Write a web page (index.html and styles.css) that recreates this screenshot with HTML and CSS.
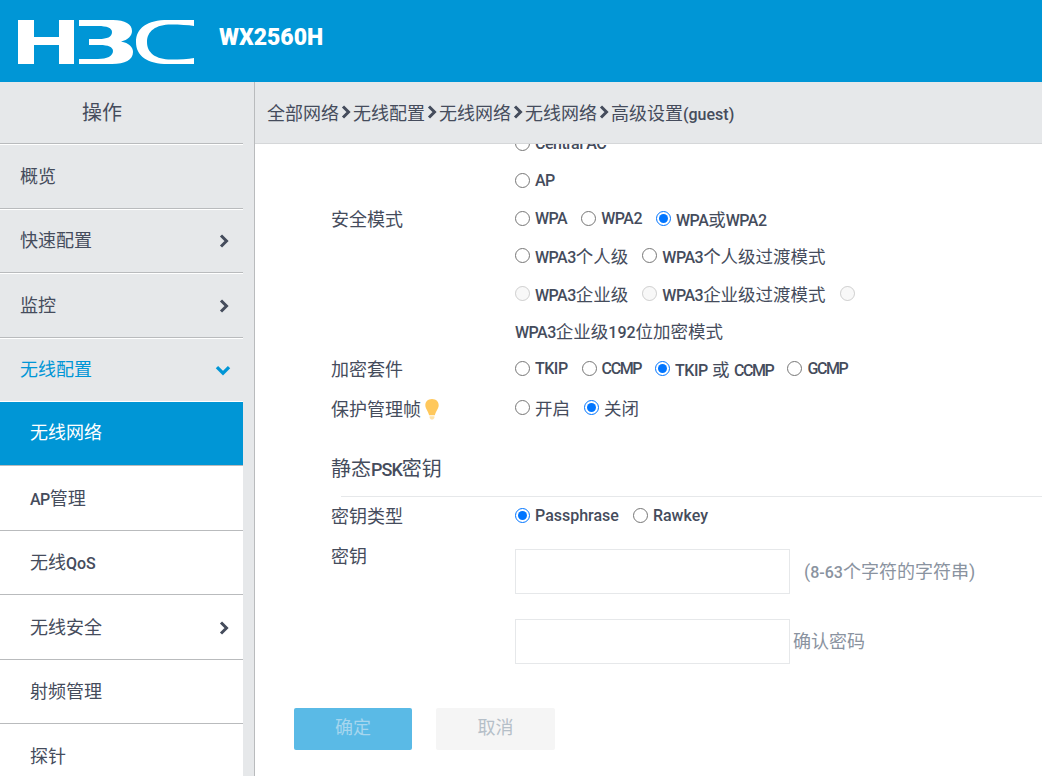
FILE: index.html
```html
<!DOCTYPE html>
<html lang="zh-CN">
<head>
<meta charset="utf-8">
<title>WX2560H</title>
<link rel="stylesheet" href="styles.css">
</head>
<body>
<header class="header">
  <svg class="logo" viewBox="0 0 176 44" width="176" height="44" aria-label="H3C">
    <path fill="#fff" d="M0 0H16V17H41V0H56V44H41V25H16V44H0Z"/>
    <path fill="#fff" d="M61 0H95C107 0 114 4 114 11C114 16 110 20 103 21.500C111 23 115 27 115 32C115 40 107 44 94 44H61V39H80C89 39 95 36 95 31C95 27 90 25 82 25H71V19H81C89 19 94 17 94 12C94 8 89 6 80 6H61Z"/>
    <path fill="#fff" d="M176 0V6C170 5 162 4.500 153 4.500C138 4.500 129 11 129 22C129 33 138 39.500 153 39.500C162 39.500 170 39 176 38V44H150C129 44 118 36 118 22C118 8 129 0 150 0Z"/>
  </svg>
  <span class="model">WX2560H</span>
</header>
<div class="main">
  <aside class="sidebar">
    <nav class="menu">
      <div class="menu-title">操作</div>
      <a class="menu-item">概览</a>
      <a class="menu-item">快速配置<svg class="chev" viewBox="0 0 10 14"><path d="M2 1.500L7.500 7L2 12.500"/></svg></a>
      <a class="menu-item">监控<svg class="chev" viewBox="0 0 10 14"><path d="M2 1.500L7.500 7L2 12.500"/></svg></a>
      <a class="menu-item open">无线配置<svg class="chev-down" viewBox="0 0 14 10"><path d="M1.500 2L7 7.500L12.500 2"/></svg></a>
      <a class="sub-item active">无线网络</a>
      <a class="sub-item"><span><span class="lat caps">AP</span>管理</span></a>
      <a class="sub-item"><span>无线<span class="lat">QoS</span></span></a>
      <a class="sub-item">无线安全<svg class="chev" viewBox="0 0 10 14"><path d="M2 1.500L7.500 7L2 12.500"/></svg></a>
      <a class="sub-item">射频管理</a>
      <a class="sub-item">探针</a>
    </nav>
    <div class="track"></div>
  </aside>
  <section class="panel">
    <div class="crumbs">
      <span>全部网络</span><svg class="sep" viewBox="0 0 10 14"><path d="M2 1.500L7.500 7L2 12.500"/></svg>
      <span>无线配置</span><svg class="sep" viewBox="0 0 10 14"><path d="M2 1.500L7.500 7L2 12.500"/></svg>
      <span>无线网络</span><svg class="sep" viewBox="0 0 10 14"><path d="M2 1.500L7.500 7L2 12.500"/></svg>
      <span>无线网络</span><svg class="sep" viewBox="0 0 10 14"><path d="M2 1.500L7.500 7L2 12.500"/></svg>
      <span>高级设置<span class="lat">(guest)</span></span>
    </div>
    <div class="scroll">
      <form class="form">
        <div class="row">
          <div class="label"></div>
          <div class="opts">
            <div class="line"><label class="opt"><input type="radio" name="ac"><span class="lat caps">Central AC</span></label></div>
            <div class="line"><label class="opt"><input type="radio" name="ac"><span class="lat caps">AP</span></label></div>
          </div>
        </div>
        <div class="row">
          <div class="label">安全模式</div>
          <div class="opts">
            <div class="line">
              <label class="opt"><input type="radio" name="sec"><span class="lat caps">WPA</span></label>
              <label class="opt"><input type="radio" name="sec"><span class="lat caps">WPA2</span></label>
              <label class="opt"><input type="radio" name="sec" checked><span><span class="lat caps">WPA</span>或<span class="lat caps">WPA2</span></span></label>
            </div>
            <div class="line">
              <label class="opt"><input type="radio" name="sec"><span><span class="lat caps">WPA3</span>个人级</span></label>
              <label class="opt"><input type="radio" name="sec"><span><span class="lat caps">WPA3</span>个人级过渡模式</span></label>
            </div>
            <div class="line">
              <label class="opt"><input type="radio" name="sec" disabled><span><span class="lat caps">WPA3</span>企业级</span></label>
              <label class="opt"><input type="radio" name="sec" disabled><span><span class="lat caps">WPA3</span>企业级过渡模式</span></label>
              <label class="opt"><input type="radio" name="sec" disabled></label>
            </div>
            <div class="line"><span><span class="lat caps">WPA3</span>企业级<span class="lat">192</span>位加密模式</span></div>
          </div>
        </div>
        <div class="row suite">
          <div class="label">加密套件</div>
          <div class="opts">
            <div class="line">
              <label class="opt"><input type="radio" name="enc"><span class="lat caps">TKIP</span></label>
              <label class="opt"><input type="radio" name="enc"><span class="lat wide-caps">CCMP</span></label>
              <label class="opt"><input type="radio" name="enc" checked><span><span class="lat caps">TKIP</span> 或 <span class="lat wide-caps">CCMP</span></span></label>
              <label class="opt"><input type="radio" name="enc"><span class="lat wide-caps">GCMP</span></label>
            </div>
          </div>
        </div>
        <div class="row pmf">
          <div class="label">保护管理帧<svg class="bulb" viewBox="0 0 16 22"><path fill="#ffc85c" d="M8 0C3.600 0 1 3 1 6.600C1 10 3.800 12.500 5 17H11C12.200 12.500 15 10 15 6.600C15 3 12.400 0 8 0Z"/><path fill="#ffe2a6" d="M5.500 18H10.500V20L9 21.500H7L5.500 20Z"/></svg></div>
          <div class="opts">
            <div class="line">
              <label class="opt"><input type="radio" name="pmf"><span>开启</span></label>
              <label class="opt"><input type="radio" name="pmf" checked><span>关闭</span></label>
            </div>
          </div>
        </div>
        <h2 class="section">静态<span class="lat psk">PSK</span>密钥</h2>
        <div class="rule"></div>
        <div class="row keytype">
          <div class="label">密钥类型</div>
          <div class="opts">
            <div class="line">
              <label class="opt"><input type="radio" name="kt" checked><span class="lat">Passphrase</span></label>
              <label class="opt"><input type="radio" name="kt"><span class="lat">Rawkey</span></label>
            </div>
          </div>
        </div>
        <div class="row key">
          <div class="label">密钥</div>
          <div class="fields">
            <div class="field"><input class="text" type="text"><span class="hint first">(<span class="lat">8-63</span>个字符的字符串)</span></div>
            <div class="field"><input class="text" type="text"><span class="hint">确认密码</span></div>
          </div>
        </div>
        <div class="actions">
          <button class="btn primary" type="button" disabled>确定</button>
          <button class="btn" type="button" disabled>取消</button>
        </div>
      </form>
    </div>
  </section>
</div>
</body>
</html>
```
FILE: styles.css
```css
* { box-sizing: border-box; }
html, body { margin: 0; height: 100%; overflow: hidden; }
body {
  font-family: Roboto, "Noto Sans CJK SC", sans-serif;
  color: #454c5c;
  background: #fff;
}
.header {
  height: 82px;
  background: #0096d6;
  display: flex;
  align-items: center;
  padding-left: 18px;
}
.logo { display: block; margin-top: 2px; }
.model {
  margin-left: 25px;
  margin-top: -7px;
  color: #fff;
  font-size: 23px;
  font-weight: 900;
}
.main { display: flex; height: 694px; }
.sidebar {
  width: 255px;
  flex: none;
  display: flex;
  border-right: 1px solid #b9bbbd;
  background: #e6e8ea;
}
.menu { width: 243px; flex: none; }
.track { flex: 1; }
.menu-title {
  height: 62px;
  line-height: 63px;
  text-align: center;
  padding-right: 39px;
  font-size: 20px;
  border-bottom: 1px solid #b9bbbd;
  box-shadow: 0 1px 0 #fff;
}
.menu-item {
  height: 64.500px;
  display: flex;
  align-items: center;
  justify-content: space-between;
  padding: 0 14px 2px 20px;
  font-size: 18px;
  border-bottom: 1px solid #b9bbbd;
  box-shadow: 0 1px 0 #fff;
}
.menu-item.open { color: #0096d6; border-bottom-color: #fff; box-shadow: none; }
.sub-item {
  height: 64.500px;
  display: flex;
  align-items: center;
  justify-content: space-between;
  padding: 0 14px 2px 30px;
  font-size: 18px;
  background: #fff;
  border-bottom: 1px solid #b9bbbd;
}
.sub-item.active { height: 64px; background: #0096d6; color: #fff; padding-bottom: 5px; }
.chev, .sep { width: 10px; height: 14px; fill: none; stroke: #454c5c; stroke-width: 3; }
.chev { margin-top: 4px; }
.chev-down { width: 16px; height: 11px; margin: 4px -2px 0 0; fill: none; stroke: #0096d6; stroke-width: 3; }
.panel { flex: 1; min-width: 0; display: flex; flex-direction: column; }
.crumbs {
  height: 62px;
  flex: none;
  display: flex;
  align-items: center;
  padding: 0 0 2px 12px;
  font-size: 18px;
  background: #e6e8ea;
  border-bottom: 1px solid #d5d7d9;
}
.sep { margin: 0 2px 0 2px; flex: none; }
.scroll { flex: 1; overflow: hidden; background: #fff; }
.form { margin-top: -19px; padding-left: 39px; }
.row { display: flex; }
.label {
  width: 221px;
  padding: 5px 0 0 37px;
  flex: none;
  font-size: 18px;
  display: flex;
  align-items: flex-start;
}
.opts { flex: 1; min-width: 0; font-size: 17.500px; }
.line { height: 37.500px; display: flex; align-items: center; gap: 14px; padding-bottom: 1px; }
.opt { display: flex; align-items: center; }
.opt input { margin: 0 5px 0 0; width: 15px; height: 15px; accent-color: #0075ff; }
.lat { font-size: 16px; font-weight: 500; }
.caps { letter-spacing: -0.500px; }
.wide-caps { letter-spacing: -1.400px; }
.psk { font-size: 18px; letter-spacing: -1px; }
.pmf { margin-top: 2px; }
.bulb { width: 16px; height: 21px; margin: 4px 0 0 3px; }
.section {
  margin: 29px 0 0 0;
  padding: 0 0 0 37px;
  font-size: 20px;
  font-weight: 400;
  line-height: 27px;
}
.rule { margin: 13px 0 0 47px; height: 1px; background: #e6e8ea; }
.key { margin-top: 2px; }
.fields { display: flex; flex-direction: column; gap: 25px; padding-top: 12px; }
.field { display: flex; align-items: center; }
.text { width: 275px; height: 45px; border: 1px solid #e6e8ea; background: #fff; outline: none; }
.hint { font-size: 18px; color: #8a93a0; margin-left: 3px; padding-bottom: 2px; }
.hint.first { margin-left: 14px; }
.actions { display: flex; gap: 24px; margin: 44px 0 0 0; }
.btn {
  width: 119px;
  height: 42px;
  border: 0;
  border-radius: 2px;
  padding: 0 0 5px;
  font: inherit;
  font-size: 18px;
  background: #f5f5f5;
  color: #b5bfc8;
}
.btn.primary { width: 118px; background: #5abae6; color: #a6d6ee; }
```
